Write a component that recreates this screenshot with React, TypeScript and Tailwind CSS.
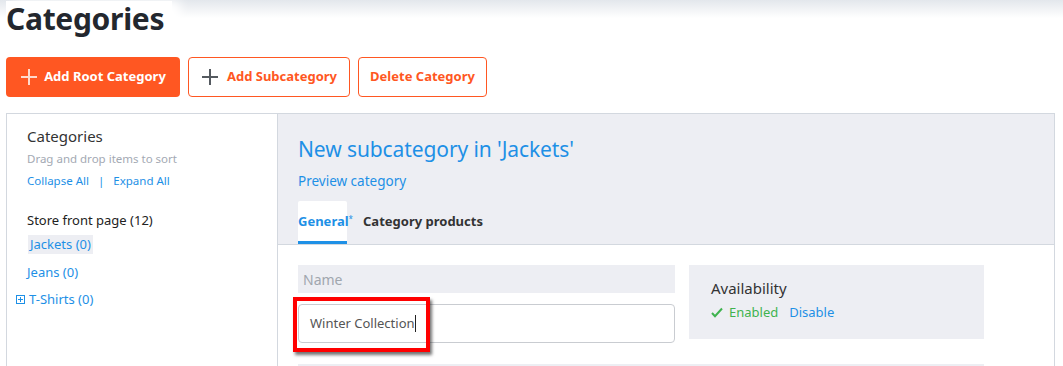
import React from "react";

const font = { fontFamily: '"Noto Sans", "Open Sans", sans-serif' };

function Plus({ color }: { color: string }) {
  return (
    <svg width="18" height="18" viewBox="0 0 18 18" fill="none">
      <path d="M9 1v16M1 9h16" stroke={color} strokeWidth="2" />
    </svg>
  );
}

export default function App() {
  return (
    <div
      className="w-[1063px] h-[366px] overflow-hidden bg-white bg-[linear-gradient(to_bottom,#e3e7ec_0px,#ffffff_18px)] text-[#333]"
      style={font}
    >
      <div className="px-[6px]">
        <div className="h-[38px] flex items-start pt-[1px]">
          <h1 className="bg-white pr-[8px] text-[30px] leading-[36px] font-bold text-[#23272e] tracking-[-0.3px] shadow-[8px_0_10px_white]">
            Categories
          </h1>
        </div>
        <div className="flex gap-[8px] mt-[19px]">
          <button className="h-[40px] w-[174px] flex items-center justify-center gap-[6px] rounded-[4px] bg-[#ff5722] text-white text-[13px] font-bold">
            <Plus color="#ffd9cc" />
            <span>Add Root Category</span>
          </button>
          <button className="h-[40px] w-[162px] flex items-center justify-center gap-[8px] rounded-[4px] border border-[#ff5722] bg-white text-[#ff5722] text-[13px] font-bold">
            <Plus color="#555a60" />
            <span>Add Subcategory</span>
          </button>
          <button className="h-[40px] w-[129px] flex items-center justify-center rounded-[4px] border border-[#ff5722] bg-white text-[#ff5722] text-[13px] font-bold">
            Delete Category
          </button>
        </div>
        <div className="mt-[16px] w-[1049px] h-[260px] border border-[#d3d8df] flex">
          <div className="w-[271px] shrink-0 border-r border-[#d3d8df] pl-[9px] pt-[12px]">
            <div className="pl-[11px]">
              <div className="text-[15px] leading-[20px] text-[#333]">Categories</div>
              <div className="text-[11.5px] leading-[16px] mt-[5px] text-[#a3a9b3]">
                Drag and drop items to sort
              </div>
              <div className="text-[11.5px] leading-[16px] mt-[6px] text-[#1e90e6] flex gap-[9px]">
                <span>Collapse All</span>
                <span>|</span>
                <span>Expand All</span>
              </div>
              <div className="text-[13px] leading-[18px] mt-[22px] text-[#222]">
                Store front page (12)
              </div>
            </div>
            <div className="pl-[12px] mt-[2px]">
              <span className="inline-block bg-[#edeef3] px-[2px] text-[13px] leading-[19px] text-[#1e90e6]">
                Jackets (0)
              </span>
            </div>
            <div className="pl-[11px] mt-[8px] text-[13px] leading-[19px] text-[#1e90e6]">Jeans (0)</div>
            <div className="mt-[8px] flex items-center gap-[4px] text-[13px] leading-[19px] text-[#1e90e6]">
              <svg width="9" height="9" viewBox="0 0 9 9">
                <rect x="0.5" y="0.5" width="8" height="8" fill="none" stroke="#1e90e6" />
                <path d="M4.5 2v5M2 4.5h5" stroke="#1e90e6" />
              </svg>
              <span>T-Shirts (0)</span>
            </div>
          </div>
          <div className="flex-1 flex flex-col min-h-0">
            <div className="h-[131px] shrink-0 bg-[#edeef3] border-b border-[#d3d8df] pl-[20px] flex flex-col">
              <div className="mt-[21px] text-[21px] leading-[28px] text-[#1e90e6] tracking-[-0.1px]">
                New subcategory in 'Jackets'
              </div>
              <div className="mt-[9px] text-[13.5px] leading-[18px] text-[#1e90e6]">Preview category</div>
              <div className="mt-auto flex items-end">
                <div className="w-[49px] h-[43px] bg-white rounded-t-[2px] flex flex-col justify-end">
                  <div className="flex items-start pb-[11px]">
                    <span className="text-[13px] leading-[18px] font-bold text-[#1e90e6]">General</span>
                    <span className="text-[8px] leading-[14px] text-[#1e90e6]">*</span>
                  </div>
                  <div className="h-[3px] bg-[#1e90e6]" />
                </div>
                <div className="ml-[16px] pb-[14px] text-[13px] leading-[18px] font-bold text-[#333]">
                  Category products
                </div>
              </div>
            </div>
            <div className="pl-[20px] pt-[20px]">
              <div className="flex gap-[14px]">
                <div className="w-[377px]">
                  <div className="h-[28px] bg-[#edeef3] flex items-center pl-[5px] text-[14px] text-[#a0a6ae]">
                    Name
                  </div>
                  <div className="relative mt-[11px]">
                    <div className="h-[39px] border border-[#c9ccd1] rounded-[4px] flex items-center pl-[11px] text-[13px] text-[#555]">
                      <span>Winter Collection</span>
                      <span className="w-[1px] h-[17px] bg-[#222]" />
                    </div>
                    <div className="absolute left-[-5px] top-[-7px] w-[137px] h-[55px] border-[4px] border-[#ff0000] shadow-[2px_3px_3px_rgba(0,0,0,0.55)]" />
                  </div>
                </div>
                <div className="w-[295px] h-[74px] bg-[#edeef3] pl-[22px] pt-[13px]">
                  <div className="text-[15px] leading-[20px] text-[#333]">Availability</div>
                  <div className="mt-[5px] flex items-center text-[13px] leading-[18px]">
                    <svg width="12" height="11" viewBox="0 0 12 11" className="mr-[6px]">
                      <path d="M1 6l3 3.2L11 1.5" stroke="#3fb34f" strokeWidth="2" fill="none" />
                    </svg>
                    <span className="text-[#3fb34f]">Enabled</span>
                    <span className="ml-[11px] text-[#1e90e6]">Disable</span>
                  </div>
                </div>
              </div>
              <div className="mt-[21px] w-[686px] h-[20px] bg-[#edeef3]" />
            </div>
          </div>
        </div>
      </div>
    </div>
  );
}
